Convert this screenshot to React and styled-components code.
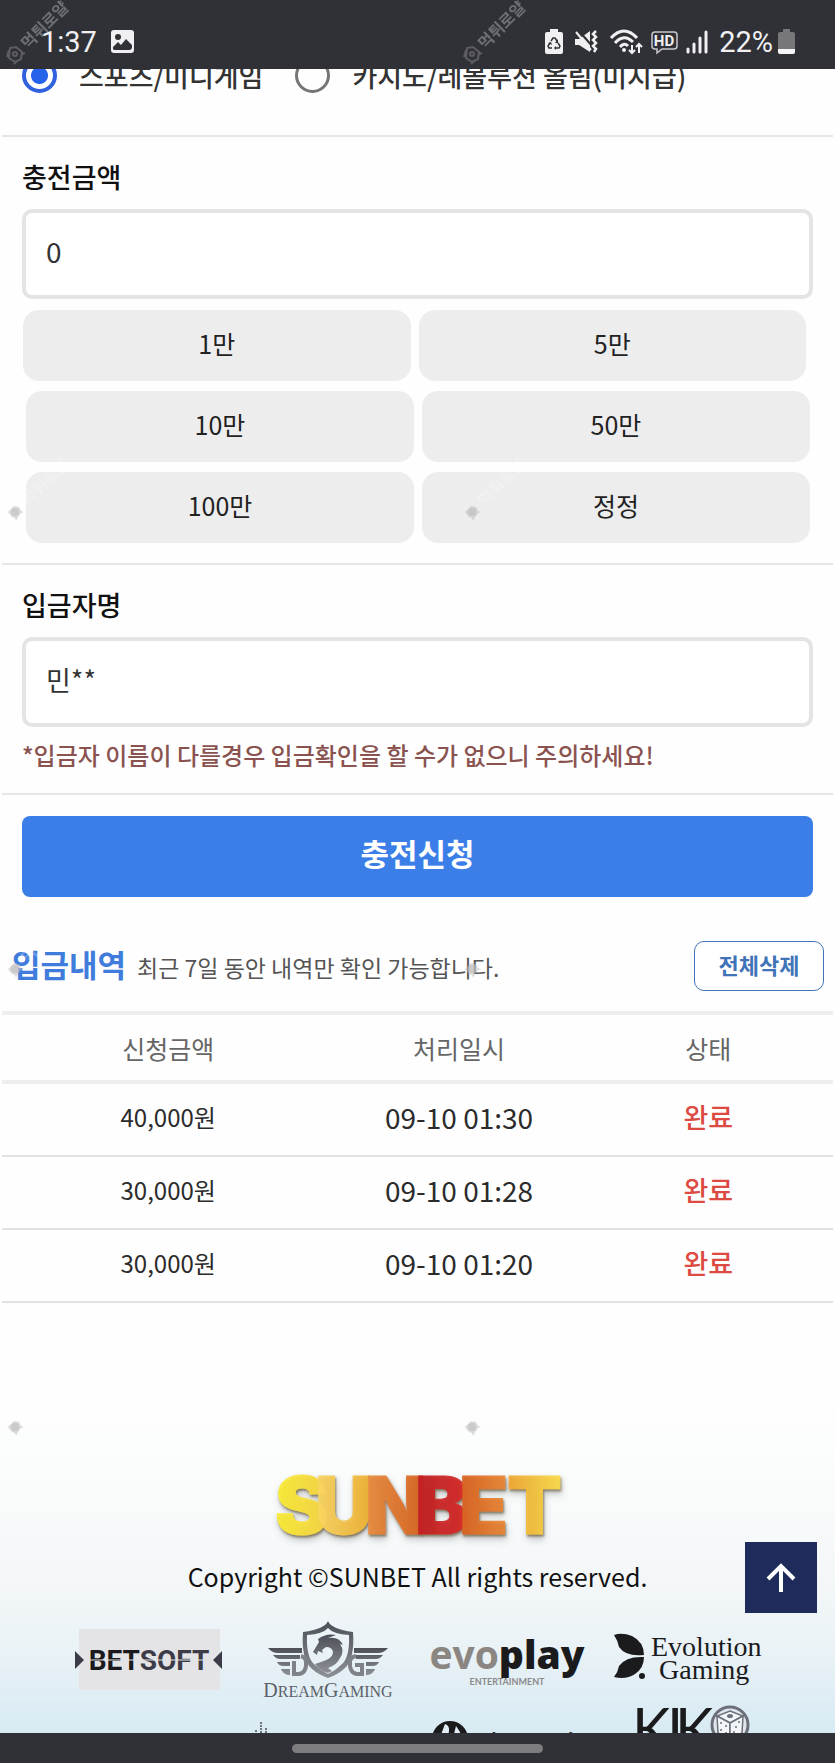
import React, { useState } from 'react'
import styled, { createGlobalStyle } from 'styled-components'

const GlobalStyle = createGlobalStyle`
    * {
        box-sizing: border-box;
    }
    body {
        margin: 0;
        background-color: #fefefe;
        color: #2b2b2b;
        font-family: "Noto Sans CJK KR", "Noto Sans", sans-serif;
    }
    button, input {
        font-family: inherit;
        margin: 0;
    }
    svg {
        overflow: visible;
    }
`;

const Page = styled.div`
    position: relative;
    height: 100vh;
    padding-top: 58px;
    overflow: hidden;
`;
const StatusBar = styled.header`
    position: fixed;
    top: 0;
    left: 0;
    right: 0;
    z-index: 5;
    height: 69px;
    padding: 14px 40px 0 41px;
    display: flex;
    align-items: center;
    justify-content: space-between;
    background-color: #303136;
    color: #f0f0f2;
    font-family: Roboto, sans-serif;
    font-size: 29px;
    line-height: 34px;
`;
const StatusGroup = styled.div`
    display: flex;
    align-items: center;
    gap: ${(props) => props.$gap}px;
`;
const NavBar = styled.nav`
    position: fixed;
    bottom: 0;
    left: 0;
    right: 0;
    z-index: 5;
    height: 30px;
    display: flex;
    align-items: center;
    justify-content: center;
    background-color: #303136;
`;
const NavHandle = styled.span`
    width: 30%;
    height: 9px;
    border-radius: 5px;
    background-color: #7d7d7f;
`;
const Main = styled.main`
    padding: 0 2px;
`;
const Options = styled.div`
    display: flex;
    align-items: center;
    gap: 32px;
    padding: 0 20px 42px;
    border-bottom: 2px solid #e6e6e6;
`;
const Option = styled.label`
    display: flex;
    align-items: center;
    gap: 22px;
    font-size: 27px;
    line-height: 34px;
    font-weight: 500;
    color: #333;
    white-space: nowrap;
`;
const Radio = styled.input`
    appearance: none;
    width: 35px;
    height: 35px;
    border: 3px solid #757575;
    border-radius: 50%;
    &:checked {
        border: 4px solid #2f62dc;
        background: radial-gradient(circle, #2563eb 8px, #fff 9px);
    }
`;
const Section = styled.section`
    padding: 22px 20px 20px;
    border-bottom: 2px solid #e6e6e6;
`;
const Label = styled.label`
    display: block;
    margin-bottom: 14px;
    font-size: 27px;
    line-height: 36px;
    font-weight: 500;
    color: #111;
`;
const Input = styled.input`
    display: block;
    width: 100%;
    height: 90px;
    padding: 0 20px 6px;
    border: 4px solid #e4e4e4;
    border-radius: 10px;
    background-color: #fff;
    color: #333;
    font-size: ${(props) => props.$size}px;
    outline: none;
`;
const Amounts = styled.div`
    display: flex;
    flex-direction: column;
    gap: 10px;
    margin-top: 11px;
`;
const AmountRow = styled.div`
    display: grid;
    grid-template-columns: 1fr 1fr;
    gap: 8px;
    padding: ${(props) => (props.$first ? "0 7px 0 1px" : "0 3px 0 4px")};
`;
const Amount = styled.button`
    height: 71px;
    padding: 0 0 6px;
    border: none;
    border-radius: 16px;
    background-color: #ededed;
    color: #222;
    font-size: 25px;
    cursor: pointer;
`;
const Warning = styled.p`
    margin: 10px 0 0;
    font-size: 24px;
    line-height: 36px;
    font-weight: 500;
    color: #8a5350;
`;
const Submit = styled.button`
    display: block;
    width: calc(100% - 40px);
    height: 81px;
    margin: 21px 20px 0;
    padding: 0 0 8px;
    border: none;
    border-radius: 8px;
    background-color: #3b7ee8;
    color: #fff;
    font-size: 31px;
    font-weight: 700;
    cursor: pointer;
`;
const HistoryHead = styled.div`
    display: flex;
    align-items: center;
    justify-content: space-between;
    margin: 44px 9px 20px 10px;
`;
const Titles = styled.div`
    display: flex;
    align-items: baseline;
    gap: 11px;
    padding-bottom: 5px;
`;
const Title = styled.h2`
    margin: 0;
    font-size: 31px;
    line-height: 44px;
    font-weight: 700;
    color: #3f7cdb;
`;
const SubTitle = styled.span`
    font-size: 23px;
    color: #555;
`;
const DeleteAll = styled.button`
    width: 130px;
    height: 50px;
    padding: 0 0 4px;
    border: 1px solid #4474b8;
    border-radius: 10px;
    background-color: #fff;
    color: #3f74b8;
    font-size: 22px;
    font-weight: 700;
    cursor: pointer;
`;
const Table = styled.table`
    width: 100%;
    table-layout: fixed;
    border-spacing: 0;
    border-top: 4px solid #eeeeee;
`;
const Th = styled.th`
    width: ${(props) => props.$width};
    height: 69px;
    padding: 0;
    border-bottom: 4px solid #eeeeee;
    font-size: 25px;
    font-weight: 400;
    color: #666;
`;
const Td = styled.td`
    height: 73px;
    padding: 0 0 6px;
    border-bottom: 2px solid #e2e2e2;
    text-align: center;
    font-size: 24px;
`;
const DateTd = styled(Td)`
    font-size: 28px;
`;
const StateTd = styled(Td)`
    font-size: 27px;
    font-weight: 500;
    color: #dc4a42;
`;
const Footer = styled.footer`
    display: flex;
    flex-direction: column;
    align-items: center;
    margin-top: 99px;
    padding-top: 68px;
    background: linear-gradient(
        #fefefe 0px,
        #fafcfc 80px,
        #f4f7f8 180px,
        #e9f2f6 250px,
        #d8eaf3 330px
    );
`;
const Copyright = styled.p`
    margin: 14px 0 20px;
    font-size: 25px;
    line-height: 36px;
    color: #111;
`;
const Partners = styled.div`
    display: grid;
    grid-template-columns: repeat(4, 180px);
`;
const TopButton = styled.button`
    position: fixed;
    right: 18px;
    bottom: 150px;
    width: 72px;
    height: 71px;
    padding: 0;
    display: flex;
    align-items: center;
    justify-content: center;
    border: none;
    background-color: #1e2b5b;
    cursor: pointer;
`;
const Stamp = styled.svg`
    position: absolute;
    left: ${(props) => props.$left}px;
    top: ${(props) => props.$top}px;
    z-index: 6;
    pointer-events: none;
`;

const amounts = [
    ["1만", "5만"],
    ["10만", "50만"],
    ["100만", "정정"],
];

const rows = [
    { amount: "40,000원", date: "09-10 01:30" },
    { amount: "30,000원", date: "09-10 01:28" },
    { amount: "30,000원", date: "09-10 01:20" },
];

const stamps = [0, 457, 914, 1372].flatMap((top) => [
    { left: 0, top },
    { left: 457, top },
]);

const Mark = ({ left, top }) => (
    <Stamp $left={left} $top={top} width="72" height="72" aria-hidden="true">
        {top === 0 ? (
            <g fill="none" stroke="#8a8a8c" strokeOpacity="0.5" strokeWidth="2">
                <path d="M10 48 l6 -1 6 5 -1 7 -6 3 -6 -4z M9 50 l-2 7 M17 61 l-3 3 M22 54 l3 -1" />
                <circle cx="15" cy="54" r="2" />
            </g>
        ) : (
            <g fill="#bdbdbf" fillOpacity="0.55">
                <path d="M8 55 l6 -6 5 1 2 4 3 1 -3 1 -3 4 -2 4 -1 -3 -3 -1z" />
                <circle cx="15" cy="55" r="4" />
            </g>
        )}
        <text
            transform="translate(28 50) rotate(-45)"
            fontFamily="Noto Sans CJK KR, sans-serif"
            fontSize="16"
            fontWeight="700"
            fill="#fff"
            fillOpacity={top === 0 ? 0.3 : 0.25}
        >먹튀로얄</text>
    </Stamp>
);

const PhotoIcon = () => (
    <svg width="23" height="23" viewBox="0 0 23 23">
        <rect width="23" height="23" rx="3" fill="#f0f0f2" />
        <circle cx="7" cy="7" r="3" fill="#303136" />
        <path d="M2 19 L2 17 L7 12 L10 15 L15 9 L21 15 V17 Q21 20 18 20 H4 Q2 20 2 19z" fill="#303136" />
    </svg>
);

const RecycleIcon = () => (
    <svg width="18" height="26" viewBox="0 0 18 26">
        <path d="M5 0 H13 V3 H16 Q18 3 18 5 V23 Q18 25 16 25 H2 Q0 25 0 23 V5 Q0 3 2 3 H5z" fill="#f0f0f2" />
        <g fill="none" stroke="#303136" strokeWidth="1.5">
            <path d="M6 12 L8 9 H10 L12 12" />
            <path d="M13 14 L15 17 L14 19 H10" />
            <path d="M7 19 H4 L3 17 L5 14" />
        </g>
        <path d="M13 10 V14 H10z M11 17 V21 L9 19z M3 14 L6 13 L7 16z" fill="#303136" />
    </svg>
);

const MuteIcon = () => (
    <svg width="25" height="24" viewBox="0 0 25 24">
        <path d="M1 9 H5 L16 1 V22 L5 15 H1z" fill="#f0f0f2" />
        <path d="M5 1 L19 17" stroke="#303136" strokeWidth="2" />
        <path d="M2 2 L17 20" stroke="#f0f0f2" strokeWidth="2" />
        <path d="M22 1 L19 4 L22 7 L19 10 L22 13 L19 16 L22 19 L20 22" fill="none" stroke="#f0f0f2" strokeWidth="2.5" />
    </svg>
);

const WifiIcon = () => (
    <svg width="33" height="26" viewBox="0 0 33 26" fill="none" stroke="#f0f0f2">
        <path d="M1 9 Q14 -5 27 9" strokeWidth="3" />
        <path d="M5 14 Q14 4 23 13" strokeWidth="3" />
        <path d="M10 18 Q14 13 18 17" strokeWidth="3" />
        <circle cx="14" cy="21" r="2" fill="#f0f0f2" stroke="none" />
        <path d="M22 16 V24 M19 21 L22 24 L25 21 M29 24 V15 M26 18 L29 15 L32 18" strokeWidth="2" />
    </svg>
);

const HdIcon = () => (
    <svg width="27" height="24" viewBox="0 0 27 24">
        <path
            d="M4 2 H23 Q26 2 26 5 V16 Q26 19 23 19 H11 L6 23 V19 H4 Q1 19 1 16 V5 Q1 2 4 2z"
            fill="none"
            stroke="#c8c8ca"
            strokeWidth="1.5"
        />
        <text x="13" y="16" textAnchor="middle" fontFamily="Roboto, sans-serif" fontSize="15" fontWeight="700" fill="#f0f0f2">HD</text>
    </svg>
);

const SignalIcon = () => (
    <svg width="22" height="24" viewBox="0 0 22 24" stroke="#f0f0f2" strokeWidth="3" strokeLinecap="round">
        <path d="M2 19 V22 M8 14 V22 M14 8 V22 M20 2 V22" />
    </svg>
);

const BatteryIcon = () => (
    <svg width="17" height="26" viewBox="0 0 17 26">
        <path d="M5 0 H12 V3 H15 Q17 3 17 5 V23 Q17 25 15 25 H2 Q0 25 0 23 V5 Q0 3 2 3 H5z" fill="#777779" />
        <path d="M0 20 H17 V23 Q17 25 15 25 H2 Q0 25 0 23z" fill="#f5f5f7" />
    </svg>
);

const ArrowUp = () => (
    <svg width="30" height="30" viewBox="0 0 30 30" fill="none" stroke="#fff" strokeWidth="4">
        <path d="M15 29 V3 M2 16 L15 3 L28 16" />
    </svg>
);

const letters = [
    { char: "S", x: 7, from: "#fbee35", to: "#f7d545" },
    { char: "U", x: 47, from: "#fad765", to: "#efb133" },
    { char: "N", x: 97, from: "#ea8f42", to: "#d8621f" },
    { char: "B", x: 147, from: "#c01c20", to: "#d92a2b" },
    { char: "E", x: 191, from: "#d9601f", to: "#ea8a37" },
    { char: "T", x: 239, from: "#f0a733", to: "#fbdf4c" },
];

const SunbetLogo = () => (
    <svg width="300" height="74" viewBox="0 0 300 74" role="img" aria-label="SUNBET">
        <defs>
            {letters.map((l) => (
                <linearGradient id={"sun" + l.char} key={l.char}>
                    <stop offset="0" stopColor={l.from} />
                    <stop offset="1" stopColor={l.to} />
                </linearGradient>
            ))}
            <filter id="logoShadow" x="-5%" y="-10%" width="110%" height="130%">
                <feDropShadow dx="1" dy="2" stdDeviation="1" floodColor="#5a4a20" floodOpacity="0.7" />
                <feDropShadow dx="1" dy="4" stdDeviation="3" floodColor="#555" floodOpacity="0.3" />
            </filter>
        </defs>
        <g filter="url(#logoShadow)" fontFamily="Inter, sans-serif" fontSize="80" fontWeight="900">
            {letters.map((l) => (
                <text
                    key={l.char}
                    x={l.x}
                    y="64"
                    fill={`url(#sun${l.char})`}
                    stroke={`url(#sun${l.char})`}
                    strokeWidth="1"
                    opacity="0.92"
                >{l.char}</text>
            ))}
        </g>
    </svg>
);

const Betsoft = () => (
    <svg width="180" height="90" viewBox="0 0 180 90">
        <rect x="21" y="15" width="141" height="61" fill="#e4e4e6" />
        <path d="M17 37 L26 46 L17 55z M164 37 L155 46 L164 55z" fill="#3c3c48" />
        <text x="91" y="56" textAnchor="middle" fontFamily="Roboto, sans-serif" fontSize="28" fontWeight="700" fill="#1a1a1c">
            BET<tspan fill="#3c3c48">SOFT</tspan>
        </text>
        <path d="M31 46 H151" stroke="#e4e4e6" strokeWidth="1" />
    </svg>
);

const DreamGaming = () => (
    <svg width="180" height="90" viewBox="0 0 180 90">
        <defs>
            <linearGradient id="dreamGrey" x1="0" y1="0" x2="0" y2="1">
                <stop offset="0" stopColor="#4c4f57" />
                <stop offset="1" stopColor="#8e9096" />
            </linearGradient>
        </defs>
        <g fill="url(#dreamGrey)">
            <path d="M30 34 H64 V39 H40 Q34 39 30 34z M35 41 H62 V45 H42 Q38 45 35 41z M39 48 H52 V52 H45 Q41 52 39 48z M43 55 H52 V61 H50 Q45 60 43 55z" />
            <path d="M150 34 H116 V39 H140 Q146 39 150 34z M145 41 H118 V45 H138 Q142 45 145 41z M141 48 H128 V52 H135 Q139 52 141 48z M137 55 H128 V61 H130 Q135 60 137 55z" />
            <path d="M90 7 Q93 15 115 18 Q117 46 106 55 Q99 61 90 64 Q81 61 74 55 Q63 46 65 18 Q87 15 90 7z M90 14 Q85 20 69 21 Q68 44 77 51 Q83 57 90 60 Q97 57 103 51 Q112 44 111 21 Q95 20 90 14z" fillRule="evenodd" />
            <path d="M75 38 L81 28 L80 25 Q88 19 98 21 L90 24 Q101 22 105 31 L102 30 Q107 37 102 44 Q99 51 90 54 L94 57 L90 59 Q82 57 77 50 L86 47 Q95 44 95 38 Q94 33 88 33 L84 36 L85 39 L80 37 L79 41z" />
        </g>
        <g fill="none" stroke="#808289" strokeWidth="4">
            <path d="M56 47 V60 H61 Q69 59 68 47 Q67 43 63 42" />
            <path d="M124 49 V60 H119 Q111 59 112 47 Q113 43 118 42 M117 51 H126" />
        </g>
        <text x="90" y="83" textAnchor="middle" fontFamily="Liberation Serif, serif" fontSize="16" fill="#5d6068">
            <tspan fontSize="20">D</tspan>REAM<tspan fontSize="20">G</tspan>AMING
        </text>
    </svg>
);

const Evoplay = () => (
    <svg width="180" height="90" viewBox="0 0 180 90">
        <text x="89" y="55" textAnchor="middle" fontFamily="Open Sans, sans-serif" fontSize="39" fontWeight="700" fill="#8b8681">
            evo<tspan fill="#1b1b1d" fontWeight="800">play</tspan>
        </text>
        <text x="89" y="71" textAnchor="middle" fontFamily="Lato, sans-serif" fontSize="9" fontWeight="700" fill="#8b8b8d">ENTERTAINMENT</text>
    </svg>
);

const Evolution = () => (
    <svg width="180" height="90" viewBox="0 0 180 90" fill="#1b1b1d">
        <path d="M16 21 Q24 18 34 22 Q46 28 46 41 Q28 43 21 33 Q20 27 16 21z" />
        <path d="M46 43 Q46 54 37 60 Q28 66 16 63 Q20 58 21 52 Q28 42 46 43z" />
        <circle cx="44" cy="62" r="3" />
        <g fontFamily="Liberation Serif, serif" fontSize="28">
            <text x="53" y="42">Evolution</text>
            <text x="61" y="65">Gaming</text>
        </g>
    </svg>
);

const Towers = () => (
    <svg width="180" height="90" viewBox="0 0 180 90">
        <path d="M23 18 V30 M18 26 V40 M28 24 V40 M23 30 V40 M14 30 V40" stroke="#70757a" strokeWidth="2" strokeDasharray="2 1" />
    </svg>
);

const Microgaming = () => (
    <svg width="180" height="90" viewBox="0 0 180 90">
        <circle cx="32" cy="35" r="18" fill="#1b1b1d" />
        <path d="M27 20 Q34 22 29 34 L23 46 L21 36z M38 22 L34 38 L42 48 L42 28z" fill="#e0edf4" />
        <text x="55" y="43" fontFamily="Open Sans, sans-serif" fontSize="19" fontWeight="700" fill="#1b1b1d">Microgaming</text>
    </svg>
);

const Kiko = () => (
    <svg width="180" height="90" viewBox="0 0 180 90">
        <g fontFamily="Lato, sans-serif" fontSize="58" fontWeight="400" fill="#1b1b1d">
            <text x="34" y="46">K</text>
            <text x="69" y="46">I</text>
            <text x="77" y="46">K</text>
        </g>
        <circle cx="132" cy="21" r="18" fill="#dfe6ec" stroke="#6c6f7a" strokeWidth="3" />
        <g fill="#f2f6f9" stroke="#6c6f7a" strokeWidth="1.5">
            <path d="M132 7 L145 12 L132 19 L119 12z" />
            <path d="M119 12 L132 19 V36 L120 29z" />
            <path d="M145 12 L132 19 V36 L144 29z" />
        </g>
        <g fill="#6c6f7a">
            <ellipse cx="132" cy="12" rx="3" ry="2" />
            <circle cx="123" cy="19" r="1" />
            <circle cx="128" cy="22" r="1" />
            <circle cx="123" cy="26" r="1" />
            <circle cx="128" cy="29" r="1" />
            <circle cx="141" cy="18" r="1" />
            <circle cx="138" cy="23" r="1" />
            <circle cx="136" cy="28" r="1" />
        </g>
    </svg>
);

const App = () => {
    const [game, setGame] = useState("sports");
    const [money, setMoney] = useState("0");
    const [name, setName] = useState("민**");

    const handleAmount = (label) => {
        if (label === "정정") {
            setMoney("0");
            return;
        }
        setMoney(String(Number(money) + parseInt(label) * 10000));
    };

    return (
        <Page>
            <GlobalStyle />
            <StatusBar>
                <StatusGroup $gap={14}>
                    <span>1:37</span>
                    <PhotoIcon />
                </StatusGroup>
                <StatusGroup $gap={11}>
                    <RecycleIcon />
                    <MuteIcon />
                    <StatusGroup $gap={8}>
                        <WifiIcon />
                        <HdIcon />
                        <SignalIcon />
                    </StatusGroup>
                    <StatusGroup $gap={5}>
                        <span>22%</span>
                        <BatteryIcon />
                    </StatusGroup>
                </StatusGroup>
            </StatusBar>
            <Main>
                <Options>
                    <Option>
                        <Radio type="radio" name="game" checked={game === "sports"} onChange={() => setGame("sports")} />
                        스포츠/미니게임
                    </Option>
                    <Option>
                        <Radio type="radio" name="game" checked={game === "casino"} onChange={() => setGame("casino")} />
                        카지노/레볼루션 올림(미지급)
                    </Option>
                </Options>
                <Section>
                    <Label htmlFor="money">충전금액</Label>
                    <Input id="money" $size={28} value={money} onChange={(e) => setMoney(e.target.value)} />
                    <Amounts>
                        {amounts.map((row, i) => (
                            <AmountRow $first={i === 0} key={row[0]}>
                                {row.map((label) => (
                                    <Amount type="button" key={label} onClick={() => handleAmount(label)}>{label}</Amount>
                                ))}
                            </AmountRow>
                        ))}
                    </Amounts>
                </Section>
                <Section>
                    <Label htmlFor="name">입금자명</Label>
                    <Input id="name" $size={27} value={name} onChange={(e) => setName(e.target.value)} />
                    <Warning>*입금자 이름이 다를경우 입금확인을 할 수가 없으니 주의하세요!</Warning>
                </Section>
                <Submit type="button">충전신청</Submit>
                <HistoryHead>
                    <Titles>
                        <Title>입금내역</Title>
                        <SubTitle>최근 7일 동안 내역만 확인 가능합니다.</SubTitle>
                    </Titles>
                    <DeleteAll type="button">전체삭제</DeleteAll>
                </HistoryHead>
                <Table>
                    <thead>
                        <tr>
                            <Th $width="40%">신청금액</Th>
                            <Th $width="30%">처리일시</Th>
                            <Th $width="30%">상태</Th>
                        </tr>
                    </thead>
                    <tbody>
                        {rows.map((row) => (
                            <tr key={row.date}>
                                <Td>{row.amount}</Td>
                                <DateTd>{row.date}</DateTd>
                                <StateTd>완료</StateTd>
                            </tr>
                        ))}
                    </tbody>
                </Table>
            </Main>
            <Footer>
                <SunbetLogo />
                <Copyright>Copyright ©SUNBET All rights reserved.</Copyright>
                <Partners>
                    <Betsoft />
                    <DreamGaming />
                    <Evoplay />
                    <Evolution />
                    <span />
                    <Towers />
                    <Microgaming />
                    <Kiko />
                </Partners>
            </Footer>
            <TopButton type="button" aria-label="맨 위로"><ArrowUp /></TopButton>
            <NavBar><NavHandle /></NavBar>
            {stamps.map((s) => (
                <Mark key={s.left + "-" + s.top} left={s.left} top={s.top} />
            ))}
        </Page>
    )
}

export default App
